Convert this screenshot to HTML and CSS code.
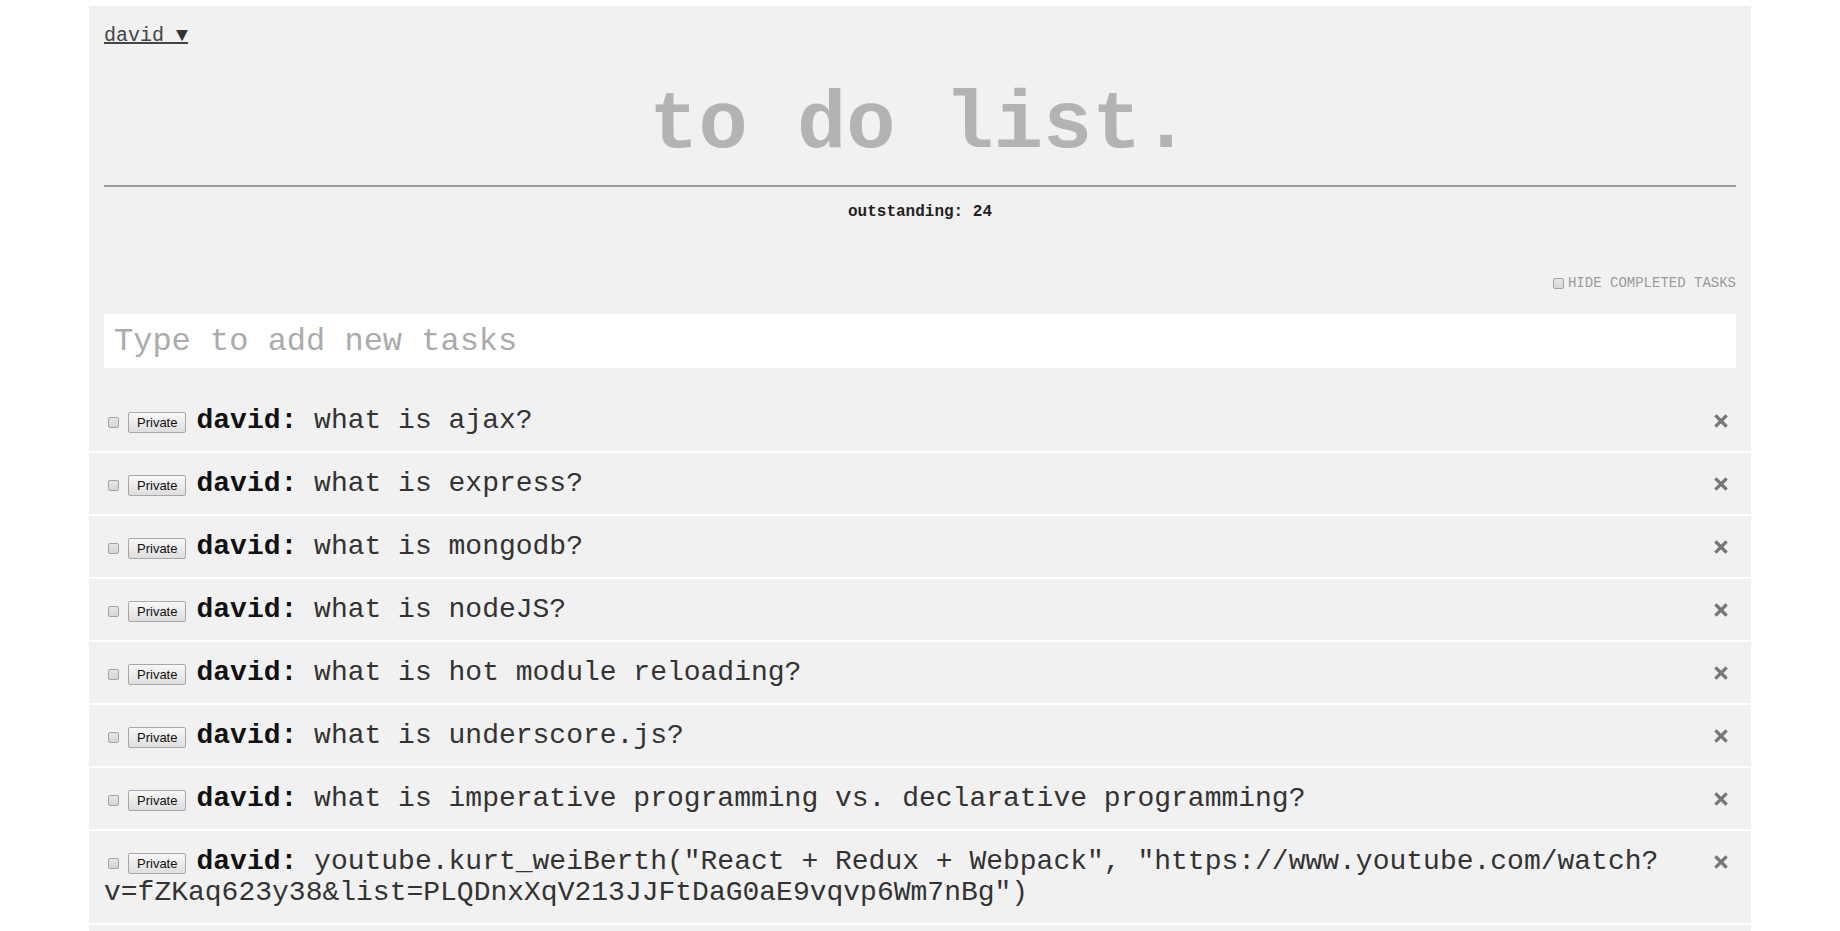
FILE: index.html
```html
<!DOCTYPE html>
<html lang="en">
<head>
<meta charset="utf-8">
<title>to do list.</title>
<link rel="stylesheet" href="styles.css">
</head>
<body>
<div class="app">
  <header class="header">
    <div class="account"><a class="user-link" href="#">david <span class="caret">▼</span></a></div>
    <h1 class="title">to do list.</h1>
    <div class="divider"></div>
    <div class="outstanding">outstanding: 24</div>
    <div class="hide-row"><label class="hide-completed"><input type="checkbox" class="check"><span>Hide Completed Tasks</span></label></div>
    <form class="new-task"><input type="text" class="new-task-input" placeholder="Type to add new tasks"></form>
  </header>
  <ul class="tasks">
    <li class="task"><button class="delete" type="button"><svg width="14" height="14" viewBox="0 0 14 14"><path d="M2.5 2.5L11.5 11.5M11.5 2.5L2.5 11.5" stroke="#777" stroke-width="3.2" stroke-linecap="square"/></svg></button><input type="checkbox" class="check task-check"><button class="private" type="button">Private</button><span class="text"><strong class="owner">david:</strong> what is ajax?</span></li>
    <li class="task"><button class="delete" type="button"><svg width="14" height="14" viewBox="0 0 14 14"><path d="M2.5 2.5L11.5 11.5M11.5 2.5L2.5 11.5" stroke="#777" stroke-width="3.2" stroke-linecap="square"/></svg></button><input type="checkbox" class="check task-check"><button class="private" type="button">Private</button><span class="text"><strong class="owner">david:</strong> what is express?</span></li>
    <li class="task"><button class="delete" type="button"><svg width="14" height="14" viewBox="0 0 14 14"><path d="M2.5 2.5L11.5 11.5M11.5 2.5L2.5 11.5" stroke="#777" stroke-width="3.2" stroke-linecap="square"/></svg></button><input type="checkbox" class="check task-check"><button class="private" type="button">Private</button><span class="text"><strong class="owner">david:</strong> what is mongodb?</span></li>
    <li class="task"><button class="delete" type="button"><svg width="14" height="14" viewBox="0 0 14 14"><path d="M2.5 2.5L11.5 11.5M11.5 2.5L2.5 11.5" stroke="#777" stroke-width="3.2" stroke-linecap="square"/></svg></button><input type="checkbox" class="check task-check"><button class="private" type="button">Private</button><span class="text"><strong class="owner">david:</strong> what is nodeJS?</span></li>
    <li class="task"><button class="delete" type="button"><svg width="14" height="14" viewBox="0 0 14 14"><path d="M2.5 2.5L11.5 11.5M11.5 2.5L2.5 11.5" stroke="#777" stroke-width="3.2" stroke-linecap="square"/></svg></button><input type="checkbox" class="check task-check"><button class="private" type="button">Private</button><span class="text"><strong class="owner">david:</strong> what is hot module reloading?</span></li>
    <li class="task"><button class="delete" type="button"><svg width="14" height="14" viewBox="0 0 14 14"><path d="M2.5 2.5L11.5 11.5M11.5 2.5L2.5 11.5" stroke="#777" stroke-width="3.2" stroke-linecap="square"/></svg></button><input type="checkbox" class="check task-check"><button class="private" type="button">Private</button><span class="text"><strong class="owner">david:</strong> what is underscore.js?</span></li>
    <li class="task"><button class="delete" type="button"><svg width="14" height="14" viewBox="0 0 14 14"><path d="M2.5 2.5L11.5 11.5M11.5 2.5L2.5 11.5" stroke="#777" stroke-width="3.2" stroke-linecap="square"/></svg></button><input type="checkbox" class="check task-check"><button class="private" type="button">Private</button><span class="text"><strong class="owner">david:</strong> what is imperative programming vs. declarative programming?</span></li>
    <li class="task"><button class="delete" type="button"><svg width="14" height="14" viewBox="0 0 14 14"><path d="M2.5 2.5L11.5 11.5M11.5 2.5L2.5 11.5" stroke="#777" stroke-width="3.2" stroke-linecap="square"/></svg></button><input type="checkbox" class="check task-check"><button class="private" type="button">Private</button><span class="text"><strong class="owner">david:</strong> youtube.kurt_weiBerth("React + Redux + Webpack", "https://www.youtube.com/watch?<wbr>v=fZKaq623y38&amp;list=PLQDnxXqV213JJFtDaG0aE9vqvp6Wm7nBg")</span></li>
  </ul>
</div>
</body>
</html>
```

FILE: styles.css
```css
* {
  box-sizing: border-box;
}

html,
body {
  margin: 0;
  padding: 0;
  background: #ffffff;
}

body {
  font-family: "Courier New", "Liberation Mono", monospace;
  color: #333333;
}

.app {
  width: 1662px;
  margin: 6px auto 0;
  padding-bottom: 40px;
  background: #f1f1f1;
}

.header {
  padding: 18px 15px 22px;
}

.account {
  font-size: 20px;
  line-height: 23px;
}

.user-link {
  color: #444444;
  text-decoration: underline;
}

.caret {
  color: #333333;
  font-size: 20px;
}

.title {
  margin: 32px 0 0;
  font-size: 82px;
  line-height: normal;
  font-weight: bold;
  text-align: center;
  color: #b3b3b3;
}

.divider {
  margin-top: 13px;
  height: 2px;
  background: #9e9e9e;
}

.outstanding {
  margin-top: 16px;
  font-size: 16px;
  line-height: 18px;
  font-weight: bold;
  text-align: center;
  color: #222222;
}

.hide-row {
  margin-top: 54px;
  text-align: right;
  line-height: 16px;
}

.hide-completed {
  font-size: 14px;
  text-transform: uppercase;
  color: #9a9a9a;
}

.check {
  -webkit-appearance: none;
  appearance: none;
  width: 11px;
  height: 11px;
  margin: 0 4px 0 0;
  border: 1px solid #a3a3a3;
  border-radius: 2px;
  background: linear-gradient(#e6e6e6, #d6d6d6);
  vertical-align: middle;
}

.new-task {
  margin: 23px 0 0;
}

.new-task-input {
  display: block;
  width: 100%;
  height: 54px;
  padding: 0 10px;
  border: 0;
  outline: none;
  background: #ffffff;
  font-family: "Courier New", "Liberation Mono", monospace;
  font-size: 32px;
  color: #333333;
}

.new-task-input::placeholder {
  color: #ababab;
}

.tasks {
  margin: 0;
  padding: 0;
  list-style: none;
}

.task {
  padding: 15px;
  font-size: 28px;
  line-height: 31px;
  background: #f1f1f1;
  border-bottom: 2px solid #ffffff;
  color: #333333;
}

.task-check {
  margin: 3px 9px 0 4px;
}

.private {
  height: 21px;
  margin: 3px 10px 0 0;
  padding: 0 8px;
  border: 1px solid #a7a7a7;
  border-radius: 2px;
  background: linear-gradient(#f8f8f8, #dedede);
  font-family: "Liberation Sans", Arial, sans-serif;
  font-size: 13px;
  line-height: 19px;
  color: #111111;
  vertical-align: middle;
}

.owner {
  color: #111111;
  font-weight: bold;
}

.delete {
  float: right;
  margin: 9px 8px 0 0;
  padding: 0;
  border: 0;
  background: none;
  height: 14px;
  width: 14px;
  line-height: 0;
}

.delete svg {
  display: block;
}
```
